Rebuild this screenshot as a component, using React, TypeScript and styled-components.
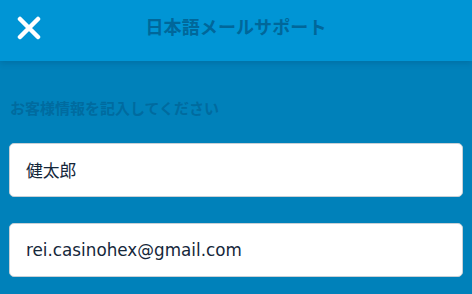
import styled, { createGlobalStyle } from "styled-components";

const GlobalStyle = createGlobalStyle`
  html, body {
    margin: 0;
    padding: 0;
    background: #0081ba;
    font-family: "Liberation Sans", "Noto Sans CJK JP", sans-serif;
  }
`;

const Page = styled.div`
  width: 472px;
  height: 294px;
  background: #0081ba;
  overflow: hidden;
`;

const Header = styled.div`
  position: relative;
  height: 61px;
  background: #0095d5;
  display: flex;
  align-items: center;
  justify-content: center;
  box-shadow: 0 2px 6px rgba(0, 60, 100, 0.25);
`;

const CloseButton = styled.button`
  position: absolute;
  left: 15px;
  top: 14px;
  width: 28px;
  height: 28px;
  padding: 0;
  border: none;
  background: transparent;
  display: flex;
  align-items: center;
  justify-content: center;
`;

const Title = styled.h1`
  margin: 0;
  font-size: 18px;
  font-weight: bold;
  color: #00679a;
  letter-spacing: 0.1px;
  margin-top: -10px;
`;

const Form = styled.div`
  display: flex;
  flex-direction: column;
  padding: 0 9px;
`;

const Label = styled.div`
  margin-top: 36px;
  font-size: 15px;
  font-weight: bold;
  color: #006b9f;
  padding-left: 1px;
`;

const Field = styled.div<{ $top: number }>`
  margin-top: ${(p) => p.$top}px;
  height: 54px;
  background: #fff;
  border: 1px solid #c8d0d6;
  border-radius: 5px;
  box-sizing: border-box;
  display: flex;
  align-items: center;
  padding-left: 16px;
  font-family: "DejaVu Sans", "Noto Sans CJK JP", sans-serif;
  font-size: 16.8px;
  color: #15273a;
`;

export default function App() {
  return (
    <Page>
      <GlobalStyle />
      <Header>
        <CloseButton>
          <svg width="24" height="24" viewBox="0 0 24 24">
            <path
              d="M3 3 L21 21 M21 3 L3 21"
              stroke="#fff"
              strokeWidth="4.5"
              strokeLinecap="round"
            />
          </svg>
        </CloseButton>
        <Title>日本語メールサポート</Title>
      </Header>
      <Form>
        <Label>お客様情報を記入してください</Label>
        <Field $top={25}>健太郎</Field>
        <Field $top={26}>rei.casinohex@gmail.com</Field>
      </Form>
    </Page>
  );
}
